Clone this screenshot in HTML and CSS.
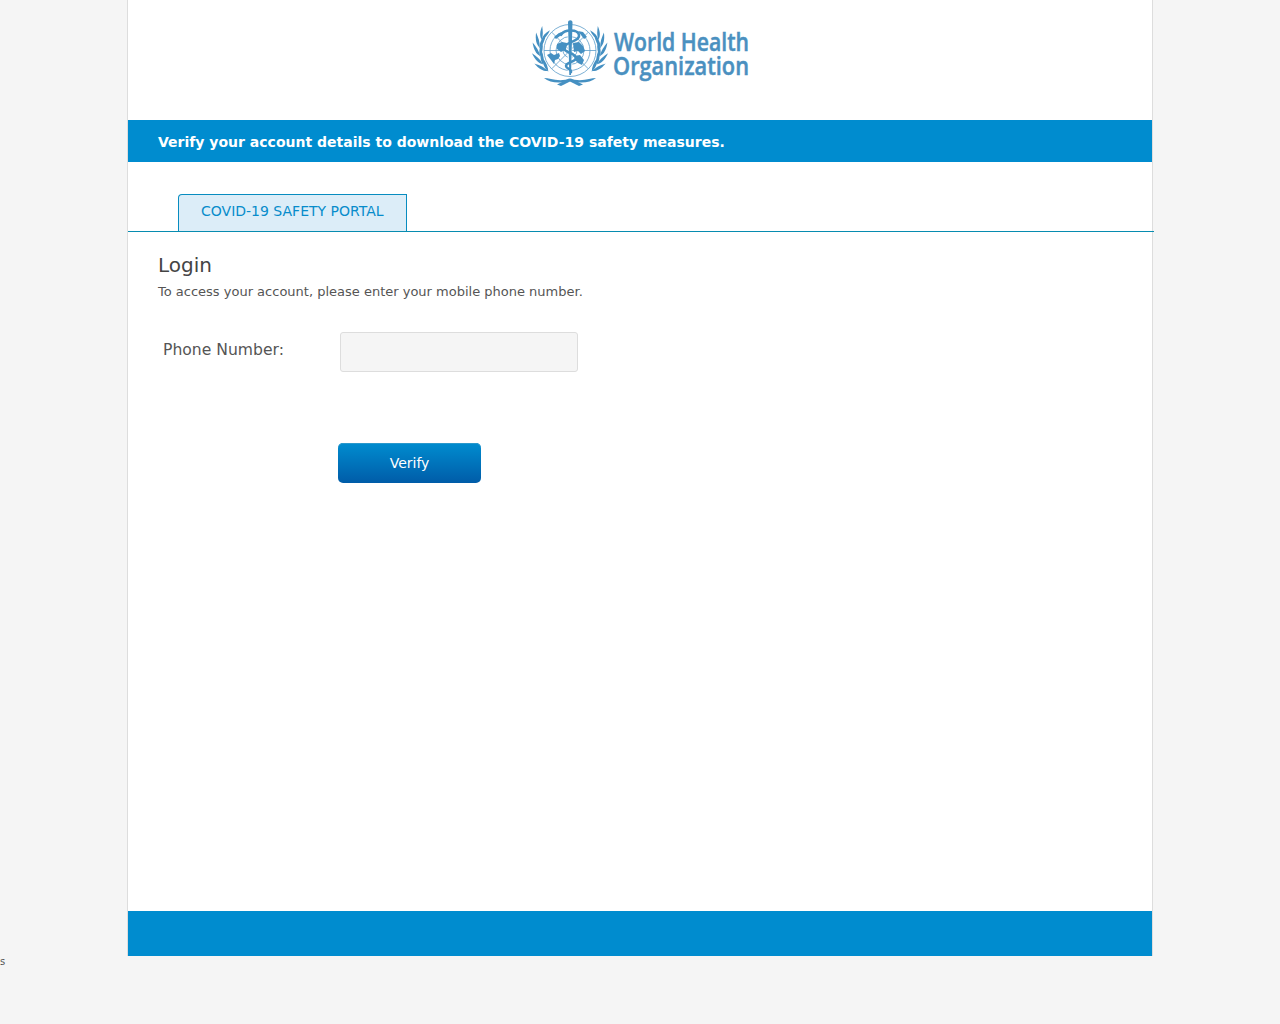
FILE: index.html
```html
<!DOCTYPE html>
<html lang="en">
<head>
<meta charset="utf-8">
<title>Portal layout mock</title>
<link rel="stylesheet" href="styles.css">
</head>
<body>
<div class="page">
  <header class="masthead">
    <svg class="logo" width="230" height="80" viewBox="0 0 230 80" role="img" aria-label="World Health Organization">
      <defs>
        <g id="leaf">
          <path d="M1 2C-3-1-5-6-5-14C-2-9 1-4 1 2Z"/>
          <path d="M1 3C0-3 2-8 6-13C6-6 4-1 1 3Z"/>
        </g>
        <g id="branch">
          <use href="#leaf" transform="rotate(23 45 38) translate(14 38) scale(.8)"/>
          <use href="#leaf" transform="rotate(8 45 38) translate(13.500 38) scale(.9)"/>
          <use href="#leaf" transform="rotate(-8 45 38) translate(13.500 38) scale(.9)"/>
          <use href="#leaf" transform="rotate(-24 45 38) translate(13.500 38) scale(.9)"/>
          <use href="#leaf" transform="rotate(-40 45 38) translate(13.500 38) scale(.9)"/>
          <path d="M19 66C25 66 33 70.500 46 66.500L58 72.500L54 74L44 69C36 71.500 25 71.500 19 66Z"/>
        </g>
      </defs>
      <g class="globe-lines">
        <circle cx="45" cy="38.500" r="26"/>
        <circle cx="45" cy="38.500" r="20"/>
        <circle cx="45" cy="38.500" r="14"/>
        <circle cx="45" cy="38.500" r="7"/>
        <path d="M19 38.500H71M26.600 20.100L63.400 56.900M63.400 20.100L26.600 56.900"/>
      </g>
      <g class="logo-fill">
        <path d="M22 43L26 41L29 43L34 41L35 44L33 47L30 48L29 52L26 48Z"/>
        <path d="M32 32L37 30L42 31L41 37L36 40L32 37Z"/>
        <path d="M48 31L54 30L58 34L60 39L56 42L53 39L49 40Z"/>
        <path d="M49 44L55 43L59 48L57 53L53 51L50 48Z"/>
        <path d="M29 25L34 21L38 20L35 24L31 27Z"/>
        <path d="M53 19L58 20L62 25L59 27Z"/>
        <use href="#branch"/>
        <use href="#branch" transform="translate(90 0) scale(-1 1)"/>
      </g>
      <path class="halo" d="M45 16V62"/>
      <path class="rod" d="M43 10.500C43 7.500 47.500 7.500 47.500 10.500L46 63H44.300Z"/>
      <path class="snake" d="M36 23C39 17 53 17 54 23C55 30 39 30 39 36C39 41 51 41 51 46C51 50 41 50 41 54C41 57 47 57 46 60"/>
      <text class="wordmark" x="89" y="39" textLength="135" lengthAdjust="spacingAndGlyphs">World Health</text>
      <text class="wordmark" x="88" y="63" textLength="136" lengthAdjust="spacingAndGlyphs">Organization</text>
    </svg>
  </header>
  <div class="banner">Verify your account details to download the COVID-19 safety measures.</div>
  <nav class="tabs"><span class="tab">COVID-19 SAFETY PORTAL</span></nav>
  <main class="content">
    <h1 class="title">Login</h1>
    <p class="intro">To access your account, please enter your mobile phone number.</p>
    <div class="row">
      <span class="label">Phone Number:</span>
      <div class="field"></div>
    </div>
    <div class="button">Verify</div>
  </main>
  <div class="footer"></div>
</div>
<div class="stray">s</div>
</body>
</html>
```
FILE: styles.css
```css
* { box-sizing: border-box; }
body {
  margin: 0;
  background: #f5f5f5;
  color: #555;
  font-family: "DejaVu Sans", sans-serif;
  height: 1024px;
  overflow: hidden;
}
.page {
  width: 1026px;
  height: 956px;
  margin: 0 auto;
  display: flex;
  flex-direction: column;
  background: #fff;
  border: solid #ddd;
  border-width: 0 1px;
}
.masthead {
  height: 120px;
  flex: none;
  padding: 12px 0 0 397px;
}
.logo { display: block; overflow: visible; }
.globe-lines { fill: none; stroke: #5a9cc9; stroke-width: .8; }
.logo-fill, .rod { fill: #4590c2; }
.halo { stroke: #fff; stroke-width: 4.500; }
.snake { fill: none; stroke: #4590c2; stroke-width: 2.500; stroke-linecap: round; }
.wordmark {
  fill: #4a90c0;
  stroke: #4a90c0;
  stroke-width: .5;
  font: 600 26px "Open Sans", sans-serif;
}
.banner {
  height: 42px;
  flex: none;
  padding-left: 30px;
  background: #008ccf;
  color: #fff;
  font-size: 14px;
  font-weight: 700;
  line-height: 44px;
}
.tabs {
  display: flex;
  flex: none;
  align-items: flex-end;
  width: 1026px;
  height: 70px;
  padding-left: 50px;
  border-bottom: 1px solid #078cb0;
}
.tab {
  width: 229px;
  height: 37px;
  padding-left: 22px;
  background: #dcedf8;
  border: 1px solid #078cc0;
  border-bottom: 0;
  border-top-left-radius: 4px;
  color: #078ccb;
  font-size: 14px;
  line-height: 33px;
}
.content { flex: 1; padding: 21px 30px 0; }
.title {
  margin: 0;
  color: #444;
  font-size: 20px;
  font-weight: 400;
  line-height: 24px;
}
.intro { margin: 5px 0 0; font-size: 13px; line-height: 20px; }
.row { display: flex; margin-top: 30px; padding-left: 5px; }
.label { width: 177px; font-size: 15.6px; line-height: 37px; }
.field {
  width: 238px;
  height: 40px;
  background: #f5f5f5;
  border: 1px solid #ddd;
  border-radius: 3px;
}
.button {
  width: 143px;
  height: 40px;
  margin: 71px 0 0 180px;
  border-radius: 5px;
  background: linear-gradient(#008ccf, #005ca8);
  box-shadow: inset 0 1px #2b98cc;
  color: #fff;
  font-size: 14px;
  line-height: 40px;
  text-align: center;
}
.footer { height: 45px; flex: none; background: #008ccf; }
.stray { font-size: 10px; line-height: 12px; }
```
